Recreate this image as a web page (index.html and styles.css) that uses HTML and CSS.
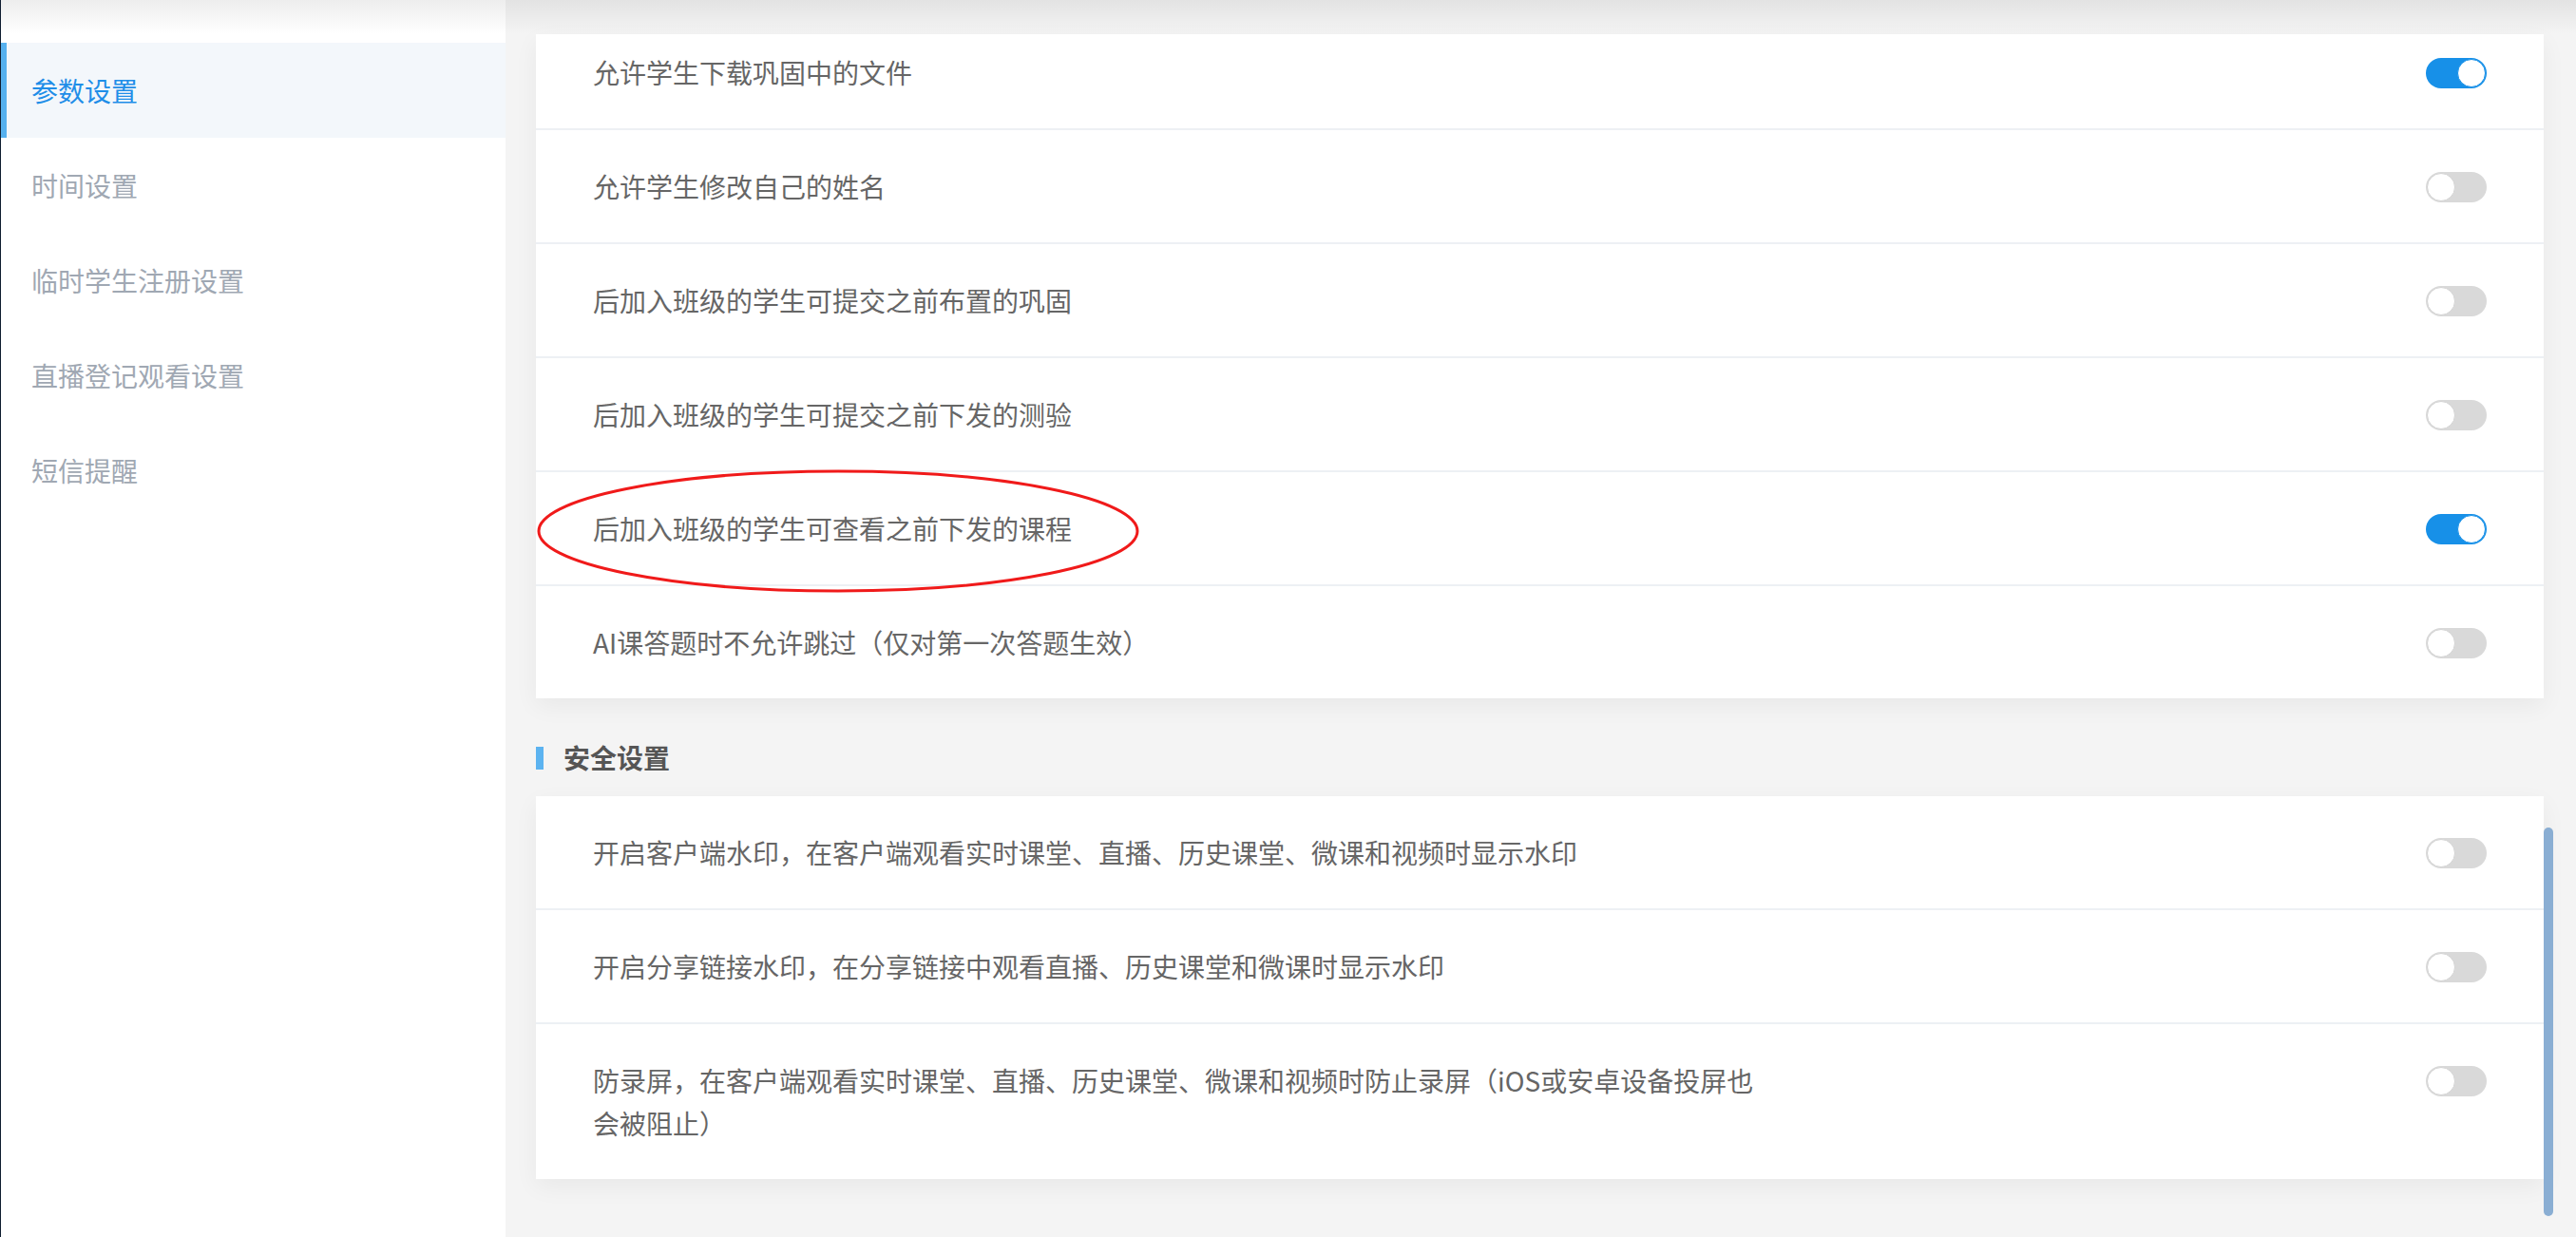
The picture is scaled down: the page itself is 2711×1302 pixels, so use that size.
FILE: index.html
```html
<!DOCTYPE html>
<html lang="zh-CN">
<head>
    <meta charset="UTF-8">
    <meta name="viewport" content="width=device-width, initial-scale=1.0">
    <title>班级设置</title>
    <link rel="stylesheet" href="styles.css">
</head>
<body>
<div class="page">
    <aside class="sidebar">
        <ul class="nav">
            <li class="nav-item active">参数设置</li>
            <li class="nav-item">时间设置</li>
            <li class="nav-item">临时学生注册设置</li>
            <li class="nav-item">直播登记观看设置</li>
            <li class="nav-item">短信提醒</li>
        </ul>
    </aside>

    <main class="content">
        <div class="card">
            <div class="row row-clipped">
                <span class="label">允许学生下载巩固中的文件</span>
                <span class="ctl"><span class="switch on"><i class="knob"></i></span></span>
            </div>
            <div class="row">
                <span class="label">允许学生修改自己的姓名</span>
                <span class="ctl"><span class="switch"><i class="knob"></i></span></span>
            </div>
            <div class="row">
                <span class="label">后加入班级的学生可提交之前布置的巩固</span>
                <span class="ctl"><span class="switch"><i class="knob"></i></span></span>
            </div>
            <div class="row">
                <span class="label">后加入班级的学生可提交之前下发的测验</span>
                <span class="ctl"><span class="switch"><i class="knob"></i></span></span>
            </div>
            <div class="row">
                <span class="label">后加入班级的学生可查看之前下发的课程</span>
                <span class="ctl"><span class="switch on"><i class="knob"></i></span></span>
            </div>
            <div class="row">
                <span class="label">AI课答题时不允许跳过（仅对第一次答题生效）</span>
                <span class="ctl"><span class="switch"><i class="knob"></i></span></span>
            </div>
        </div>

        <h3 class="section-title">安全设置</h3>

        <div class="card">
            <div class="row">
                <span class="label">开启客户端水印，在客户端观看实时课堂、直播、历史课堂、微课和视频时显示水印</span>
                <span class="ctl"><span class="switch"><i class="knob"></i></span></span>
            </div>
            <div class="row">
                <span class="label">开启分享链接水印，在分享链接中观看直播、历史课堂和微课时显示水印</span>
                <span class="ctl"><span class="switch"><i class="knob"></i></span></span>
            </div>
            <div class="row">
                <span class="label">防录屏，在客户端观看实时课堂、直播、历史课堂、微课和视频时防止录屏（iOS或安卓设备投屏也会被阻止）</span>
                <span class="ctl"><span class="switch"><i class="knob"></i></span></span>
            </div>
        </div>

        <div class="scroll-thumb"></div>
    </main>

    <div class="top-shade"></div>

    <!-- red hand-drawn mark around one setting -->
    <svg class="mark" width="636" height="134" viewBox="0 0 636 134">
        <ellipse cx="318" cy="67" rx="315" ry="63" fill="none" stroke="#f01a1a" stroke-width="3"/>
    </svg>
</div>
</body>
</html>
```

FILE: styles.css
```css
* {
    box-sizing: border-box;
}
body {
    margin: 0;
    height: 100vh;
    overflow: hidden;
    font-family: "Noto Sans CJK SC", "Noto Sans", sans-serif;
    font-size: 28px;
    color: #666;
    background-color: #f4f4f4;
}
.page {
    position: relative;
    display: flex;
    height: 100vh;
}

/* left menu */
.sidebar {
    width: 532px;
    flex-shrink: 0;
    background-color: #fff;
    border-left: 1px solid #0f1d30;
}
.nav {
    list-style: none;
    margin: 0;
    padding: 45px 0 0 0;
}
.nav-item {
    height: 100px;
    line-height: 100px;
    padding-left: 26px;
    border-left: 6px solid transparent;
    color: #a0a8b3;
}
.nav-item.active {
    color: #1f8ee8;
    background-color: #f3f7fb;
    border-left-color: #56b1ef;
}

/* settings */
.content {
    position: relative;
    flex: 1;
    padding: 36px 34px 0 32px;
    background-color: #f4f4f4;
}
.card {
    background-color: #fff;
    box-shadow: 0 8px 24px rgba(0,0,0,0.05);
}
.row {
    display: flex;
    justify-content: space-between;
    align-items: flex-start;
    padding: 37px 60px 36px;
    line-height: 45px;
    border-bottom: 2px solid #edf0f4;
}
.row:last-child {
    border-bottom: none;
}
.row-clipped {
    padding-top: 18px;
}
.label {
    max-width: 1240px;
}
.ctl {
    display: flex;
    align-items: center;
    height: 45px;
}
.switch {
    display: flex;
    width: 64px;
    height: 32px;
    padding: 1px;
    border-radius: 16px;
    background-color: #d9d9d9;
}
.switch .knob {
    width: 30px;
    height: 30px;
    border-radius: 50%;
    background-color: #fff;
    border: 1px solid #d3d3d3;
}
.switch.on {
    justify-content: flex-end;
    background-color: #1790e8;
}
.switch.on .knob {
    border-color: #1790e8;
}

.section-title {
    display: flex;
    align-items: center;
    margin: 0;
    padding: 40px 0 18px;
    line-height: 45px;
    font-size: 28px;
    font-weight: bold;
    color: #555;
}
.section-title::before {
    content: "";
    width: 8px;
    height: 24px;
    margin-right: 21px;
    background-color: #5cb3f0;
}

.scroll-thumb {
    position: absolute;
    right: 24px;
    top: 871px;
    width: 10px;
    height: 409px;
    border-radius: 5px;
    background-color: #8aaed3;
}
.top-shade {
    position: absolute;
    top: 0;
    left: 1px;
    right: 0;
    height: 36px;
    background: linear-gradient(rgba(0,0,0,0.07), rgba(0,0,0,0));
}
.mark {
    position: absolute;
    left: 564px;
    top: 492px;
}
```
